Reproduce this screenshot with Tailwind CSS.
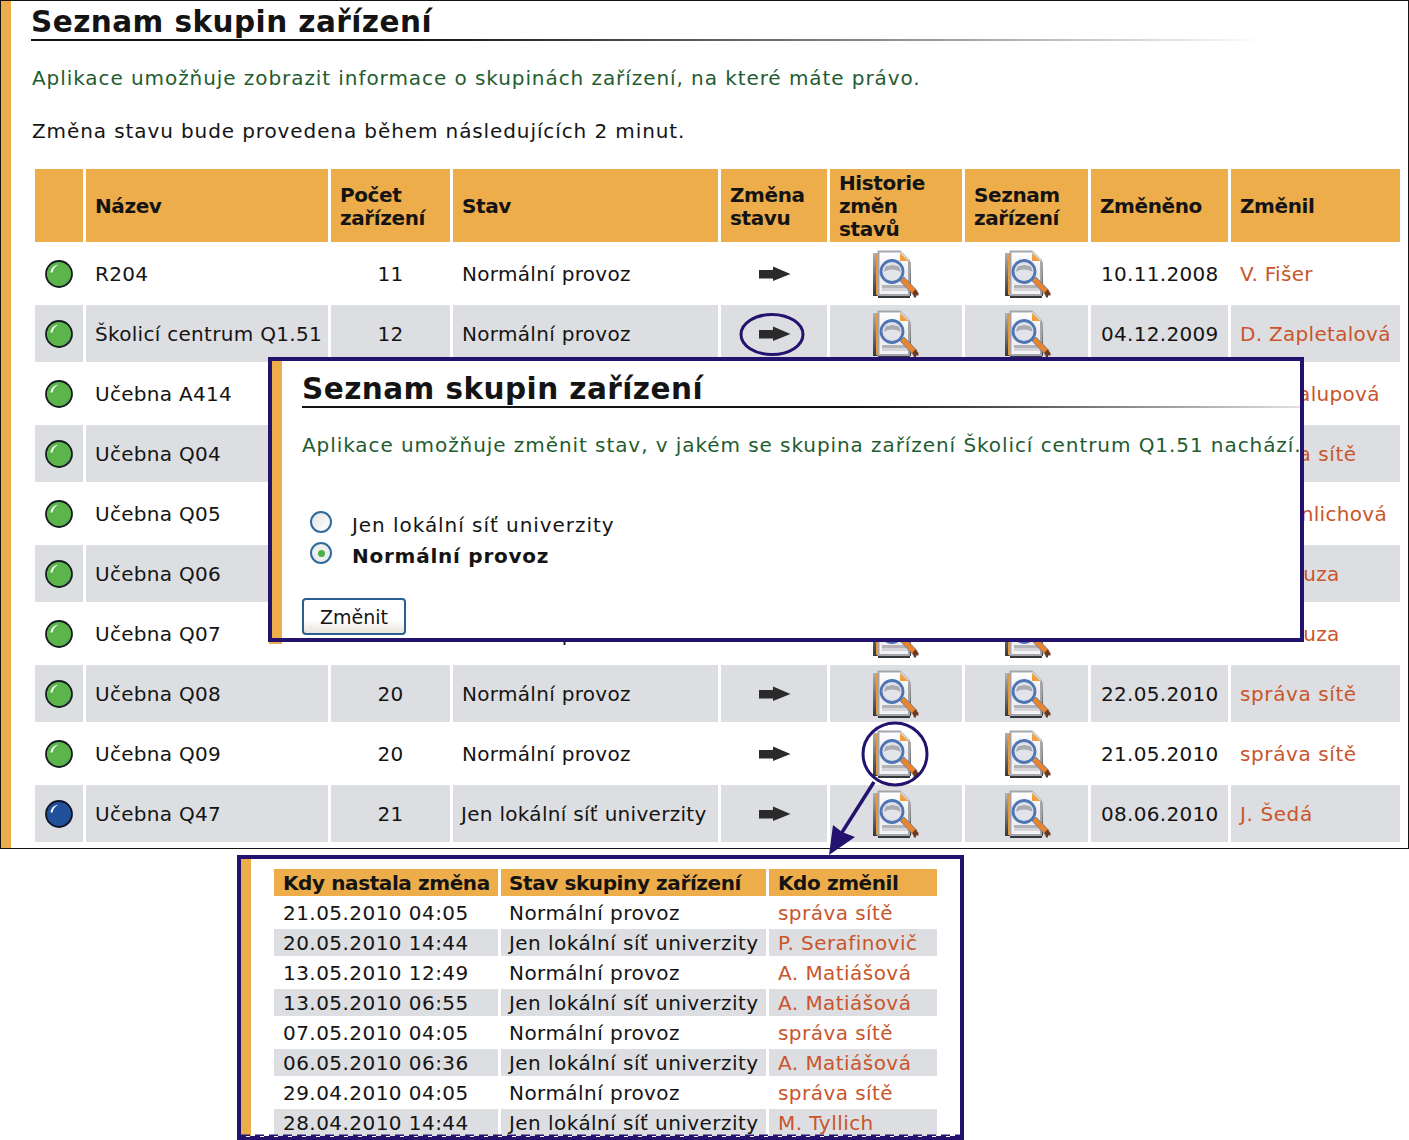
<!DOCTYPE html>
<html lang="cs">
<head>
<meta charset="utf-8">
<script src="https://cdn.jsdelivr.net/npm/@tailwindcss/browser@4"></script>
<title>Seznam skupin zařízení</title>
</head>
<body class="bg-white text-[#141414] text-[20px] font-['DejaVu_Sans',sans-serif]">
<svg class="absolute w-0 h-0" aria-hidden="true">
  <defs>
    <linearGradient id="side" x1="0" y1="0" x2="0" y2="1"><stop offset="0" stop-color="#b0b0b0"/><stop offset="1" stop-color="#33383c"/></linearGradient>
    <linearGradient id="pg" x1="0" y1="0" x2="0" y2="1"><stop offset="0" stop-color="#ffffff"/><stop offset="0.55" stop-color="#ececef"/><stop offset="1" stop-color="#f4f4f6"/></linearGradient>
    <linearGradient id="gb" x1="0.2" y1="0.2" x2="1" y2="1"><stop offset="0.7" stop-color="#5cb54a"/><stop offset="0.95" stop-color="#3f70a8"/></linearGradient>
    <linearGradient id="bb" x1="0.2" y1="0.2" x2="1" y2="1"><stop offset="0.7" stop-color="#21509c"/><stop offset="1" stop-color="#0e1f44"/></linearGradient>
    <symbol id="doc" viewBox="0 0 46 48">
      <rect x="0" y="3" width="5" height="43" fill="url(#side)"/>
      <rect x="3" y="4" width="2.500" height="41" fill="#e8963a"/>
      <rect x="5" y="45" width="32" height="3" fill="#33383c"/>
      <rect x="35" y="12" width="3" height="34" fill="url(#side)"/>
      <path d="M5.500 1.500H27L36 10.500V45H5.500Z" fill="url(#pg)" stroke="#a4a6ab" stroke-width="2"/>
      <path d="M27 2.500V11H36Z" fill="#f0a040"/>
      <path d="M27 2L36 10.500" stroke="#d8d8d8" stroke-width="1.500"/>
      <rect x="9" y="35" width="26" height="3" fill="#b4b4b8"/>
      <rect x="9" y="38" width="26" height="3" fill="#d4d4d8"/>
      <circle cx="19" cy="21.500" r="11" fill="#e2e4e9" stroke="#4f75b5" stroke-width="2.800"/>
      <path d="M11 22C12 16 14 15 16 16C18 14.500 21 14.500 23 16C25 15 27 17 27.500 22C24 18.500 14 18.500 11 22Z" fill="#a9abb0"/>
      <path d="M27 31L31 27L44 40.500L40 44.500Z" fill="#e8842c" stroke="#4f75b5" stroke-width="0.700"/>
      <path d="M39.500 42.500L42.500 39.500L45.500 43V45.500H43V47.500H41Z" fill="#6b3a22"/>
    </symbol>
    <symbol id="arrow" viewBox="0 0 32 16">
      <path d="M0 4H14V0.500L31.500 8L14 15V12.500H0Z" fill="#2b2b2b"/>
    </symbol>
    <symbol id="green" viewBox="0 0 28 28">
      <circle cx="14" cy="14" r="13" fill="url(#gb)" stroke="#141c20" stroke-width="1.800"/>
      <path d="M5.500 12.500C6 8.500 8.500 5.500 13 4.800C9.500 7 8 9.500 7.500 12.500Z" fill="#ffffff"/>
    </symbol>
    <symbol id="blue" viewBox="0 0 28 28">
      <circle cx="14" cy="14" r="13" fill="url(#bb)" stroke="#0d1525" stroke-width="1.800"/>
      <path d="M5.500 12.500C6 8.500 8.500 5.500 13 4.800C9.500 7 8 9.500 7.500 12.500Z" fill="#ffffff"/>
    </symbol>
  </defs>
</svg>

<div class="relative w-[1409px] h-[1140px] overflow-hidden">
  <!-- main frame -->
  <div class="flex w-[1409px] h-[849px] border border-[#141414]">
    <div class="w-[10px] bg-[#edad4a]"></div>
    <div class="flex-1">
      <div class="pl-[20px] h-[38px] pt-[3px]">
        <h1 class="text-[29.500px] leading-[36px] font-bold tracking-[0.450px] text-[#141414]">Seznam skupin zařízení</h1>
      </div>
      <div class="ml-[20px] w-[1234px] h-[2px] bg-linear-to-r from-[#141414] from-30% to-white"></div>
      <p class="pl-[21px] mt-[23px] h-[28px] leading-[28px] text-[#1f5c30] tracking-[0.930px]">Aplikace umožňuje zobrazit informace o skupinách zařízení, na které máte právo.</p>
      <p class="pl-[21px] mt-[25px] h-[28px] leading-[28px] tracking-[0.900px]">Změna stavu bude provedena během následujících 2 minut.</p>

      <div class="ml-[24px] mt-[24px] grid grid-cols-[48px_242px_119px_265px_106px_132px_123px_137px_169px] gap-y-[3px] gap-x-[3px] tracking-[0.300px]">
        <div class="col-span-9 grid grid-cols-subgrid h-[73px] font-bold tracking-[-0.400px] leading-[23px] [&>div]:bg-[#edad4a] [&>div]:flex [&>div]:items-center [&>div]:pl-[9px] [&>div]:pt-[2px]">
          <div></div><div>Název</div><div>Počet<br>zařízení</div><div>Stav</div><div>Změna<br>stavu</div><div>Historie<br>změn<br>stavů</div><div>Seznam<br>zařízení</div><div>Změněno</div><div>Změnil</div>
        </div>

        <div class="col-span-9 grid grid-cols-subgrid h-[57px] [&>div]:flex [&>div]:items-center">
          <div class="justify-center"><svg class="w-[28px] h-[28px]"><use href="#green"/></svg></div><div class="pl-[9px]">R204</div><div class="justify-center">11</div><div class="pl-[9px]">Normální provoz</div><div class="justify-center pl-[2px]"><svg class="w-[32px] h-[16px]"><use href="#arrow"/></svg></div><div class="justify-center"><svg class="w-[46px] h-[48px]"><use href="#doc"/></svg></div><div class="justify-center pl-[2px]"><svg class="w-[46px] h-[48px]"><use href="#doc"/></svg></div><div class="pl-[10px]">10.11.2008</div><div class="pl-[9px] text-[#c9552b]">V. Fišer</div>
        </div>
        <div class="col-span-9 grid grid-cols-subgrid h-[57px] [&>div]:bg-[#dddee2] [&>div]:flex [&>div]:items-center">
          <div class="justify-center"><svg class="w-[28px] h-[28px]"><use href="#green"/></svg></div><div class="pl-[9px] whitespace-nowrap">Školicí centrum Q1.51</div><div class="justify-center">12</div><div class="pl-[9px]">Normální provoz</div><div class="justify-center pl-[2px]"><svg class="w-[32px] h-[16px]"><use href="#arrow"/></svg></div><div class="justify-center"><svg class="w-[46px] h-[48px]"><use href="#doc"/></svg></div><div class="justify-center pl-[2px]"><svg class="w-[46px] h-[48px]"><use href="#doc"/></svg></div><div class="pl-[10px]">04.12.2009</div><div class="pl-[9px] text-[#c9552b] whitespace-nowrap">D. Zapletalová</div>
        </div>
        <div class="col-span-9 grid grid-cols-subgrid h-[57px] [&>div]:flex [&>div]:items-center">
          <div class="justify-center"><svg class="w-[28px] h-[28px]"><use href="#green"/></svg></div><div class="pl-[9px]">Učebna A414</div><div class="justify-center">14</div><div class="pl-[9px]">Normální provoz</div><div class="justify-center pl-[2px]"><svg class="w-[32px] h-[16px]"><use href="#arrow"/></svg></div><div class="justify-center"><svg class="w-[46px] h-[48px]"><use href="#doc"/></svg></div><div class="justify-center pl-[2px]"><svg class="w-[46px] h-[48px]"><use href="#doc"/></svg></div><div class="pl-[10px]">12.05.2010</div><div class="pl-[9px] text-[#c9552b] whitespace-nowrap">M. Chalupová</div>
        </div>
        <div class="col-span-9 grid grid-cols-subgrid h-[57px] [&>div]:bg-[#dddee2] [&>div]:flex [&>div]:items-center">
          <div class="justify-center"><svg class="w-[28px] h-[28px]"><use href="#green"/></svg></div><div class="pl-[9px]">Učebna Q04</div><div class="justify-center">18</div><div class="pl-[9px]">Normální provoz</div><div class="justify-center pl-[2px]"><svg class="w-[32px] h-[16px]"><use href="#arrow"/></svg></div><div class="justify-center"><svg class="w-[46px] h-[48px]"><use href="#doc"/></svg></div><div class="justify-center pl-[2px]"><svg class="w-[46px] h-[48px]"><use href="#doc"/></svg></div><div class="pl-[10px]">21.05.2010</div><div class="pl-[9px] text-[#c9552b] whitespace-nowrap tracking-[0.600px]">správa sítě</div>
        </div>
        <div class="col-span-9 grid grid-cols-subgrid h-[57px] [&>div]:flex [&>div]:items-center">
          <div class="justify-center"><svg class="w-[28px] h-[28px]"><use href="#green"/></svg></div><div class="pl-[9px]">Učebna Q05</div><div class="justify-center">20</div><div class="pl-[9px]">Normální provoz</div><div class="justify-center pl-[2px]"><svg class="w-[32px] h-[16px]"><use href="#arrow"/></svg></div><div class="justify-center"><svg class="w-[46px] h-[48px]"><use href="#doc"/></svg></div><div class="justify-center pl-[2px]"><svg class="w-[46px] h-[48px]"><use href="#doc"/></svg></div><div class="pl-[10px]">18.05.2010</div><div class="pl-[11px] text-[#c9552b] whitespace-nowrap">M. Hanlichová</div>
        </div>
        <div class="col-span-9 grid grid-cols-subgrid h-[57px] [&>div]:bg-[#dddee2] [&>div]:flex [&>div]:items-center">
          <div class="justify-center"><svg class="w-[28px] h-[28px]"><use href="#green"/></svg></div><div class="pl-[9px]">Učebna Q06</div><div class="justify-center">20</div><div class="pl-[9px]">Normální provoz</div><div class="justify-center pl-[2px]"><svg class="w-[32px] h-[16px]"><use href="#arrow"/></svg></div><div class="justify-center"><svg class="w-[46px] h-[48px]"><use href="#doc"/></svg></div><div class="justify-center pl-[2px]"><svg class="w-[46px] h-[48px]"><use href="#doc"/></svg></div><div class="pl-[10px]">17.05.2010</div><div class="pl-[9px] text-[#c9552b] whitespace-nowrap">Z. Hrouza</div>
        </div>
        <div class="col-span-9 grid grid-cols-subgrid h-[57px] [&>div]:flex [&>div]:items-center">
          <div class="justify-center"><svg class="w-[28px] h-[28px]"><use href="#green"/></svg></div><div class="pl-[9px]">Učebna Q07</div><div class="justify-center">20</div><div class="pl-[9px]">Normální provoz</div><div class="justify-center pl-[2px]"><svg class="w-[32px] h-[16px]"><use href="#arrow"/></svg></div><div class="justify-center"><svg class="w-[46px] h-[48px]"><use href="#doc"/></svg></div><div class="justify-center pl-[2px]"><svg class="w-[46px] h-[48px]"><use href="#doc"/></svg></div><div class="pl-[10px]">17.05.2010</div><div class="pl-[9px] text-[#c9552b] whitespace-nowrap">Z. Hrouza</div>
        </div>
        <div class="col-span-9 grid grid-cols-subgrid h-[57px] [&>div]:bg-[#dddee2] [&>div]:flex [&>div]:items-center">
          <div class="justify-center"><svg class="w-[28px] h-[28px]"><use href="#green"/></svg></div><div class="pl-[9px]">Učebna Q08</div><div class="justify-center">20</div><div class="pl-[9px]">Normální provoz</div><div class="justify-center pl-[2px]"><svg class="w-[32px] h-[16px]"><use href="#arrow"/></svg></div><div class="justify-center"><svg class="w-[46px] h-[48px]"><use href="#doc"/></svg></div><div class="justify-center pl-[2px]"><svg class="w-[46px] h-[48px]"><use href="#doc"/></svg></div><div class="pl-[10px]">22.05.2010</div><div class="pl-[9px] text-[#c9552b] whitespace-nowrap tracking-[0.600px]">správa sítě</div>
        </div>
        <div class="col-span-9 grid grid-cols-subgrid h-[57px] [&>div]:flex [&>div]:items-center">
          <div class="justify-center"><svg class="w-[28px] h-[28px]"><use href="#green"/></svg></div><div class="pl-[9px]">Učebna Q09</div><div class="justify-center">20</div><div class="pl-[9px]">Normální provoz</div><div class="justify-center pl-[2px]"><svg class="w-[32px] h-[16px]"><use href="#arrow"/></svg></div><div class="justify-center"><svg class="w-[46px] h-[48px]"><use href="#doc"/></svg></div><div class="justify-center pl-[2px]"><svg class="w-[46px] h-[48px]"><use href="#doc"/></svg></div><div class="pl-[10px]">21.05.2010</div><div class="pl-[9px] text-[#c9552b] whitespace-nowrap tracking-[0.600px]">správa sítě</div>
        </div>
        <div class="col-span-9 grid grid-cols-subgrid h-[57px] [&>div]:bg-[#dddee2] [&>div]:flex [&>div]:items-center">
          <div class="justify-center"><svg class="w-[28px] h-[28px]"><use href="#blue"/></svg></div><div class="pl-[9px]">Učebna Q47</div><div class="justify-center">21</div><div class="pl-[8px] whitespace-nowrap">Jen lokální síť univerzity</div><div class="justify-center pl-[2px]"><svg class="w-[32px] h-[16px]"><use href="#arrow"/></svg></div><div class="justify-center"><svg class="w-[46px] h-[48px]"><use href="#doc"/></svg></div><div class="justify-center pl-[2px]"><svg class="w-[46px] h-[48px]"><use href="#doc"/></svg></div><div class="pl-[10px]">08.06.2010</div><div class="pl-[9px] text-[#c9552b] whitespace-nowrap tracking-[0.600px]">J. Šedá</div>
        </div>
      </div>
    </div>
  </div>

  <!-- history panel -->
  <div class="ml-[237px] mt-[6px] w-[727px] h-[285px] border-[4px] border-[#24126f] flex overflow-hidden">
    <div class="w-[10px] bg-[#edad4a]"></div>
    <div class="ml-[23px] mt-[10px] w-[663px] grid grid-cols-[224px_265px_168px] gap-x-[3px] gap-y-[3px] content-start tracking-[0.450px] [&>div]:pl-[9px] [&>div:nth-child(3n+2)]:pl-[8px] [&>div]:h-[27px] [&>div]:leading-[29px] [&>div]:whitespace-nowrap">
      <div class="bg-[#edad4a] font-bold tracking-[-0.400px]">Kdy nastala změna</div><div class="bg-[#edad4a] font-bold tracking-[-0.400px]">Stav skupiny zařízení</div><div class="bg-[#edad4a] font-bold tracking-[-0.400px]">Kdo změnil</div>
      <div>21.05.2010 04:05</div><div>Normální provoz</div><div class="text-[#c9552b]">správa sítě</div>
      <div class="bg-[#dddee2]">20.05.2010 14:44</div><div class="bg-[#dddee2]">Jen lokální síť univerzity</div><div class="bg-[#dddee2] text-[#c9552b]">P. Serafinovič</div>
      <div>13.05.2010 12:49</div><div>Normální provoz</div><div class="text-[#c9552b]">A. Matiášová</div>
      <div class="bg-[#dddee2]">13.05.2010 06:55</div><div class="bg-[#dddee2]">Jen lokální síť univerzity</div><div class="bg-[#dddee2] text-[#c9552b]">A. Matiášová</div>
      <div>07.05.2010 04:05</div><div>Normální provoz</div><div class="text-[#c9552b]">správa sítě</div>
      <div class="bg-[#dddee2]">06.05.2010 06:36</div><div class="bg-[#dddee2]">Jen lokální síť univerzity</div><div class="bg-[#dddee2] text-[#c9552b]">A. Matiášová</div>
      <div>29.04.2010 04:05</div><div>Normální provoz</div><div class="text-[#c9552b]">správa sítě</div>
      <div class="bg-[#dddee2]">28.04.2010 14:44</div><div class="bg-[#dddee2]">Jen lokální síť univerzity</div><div class="bg-[#dddee2] text-[#c9552b]">M. Tyllich</div>
    </div>
  </div>

  <!-- overlay dialog -->
  <div class="absolute left-[269px] top-[641px] w-[13px] h-[3px] bg-[#edad4a]"></div>
  <div class="absolute left-[268px] top-[357px] w-[1036px] h-[285px] border-[4px] border-[#24126f] bg-white flex overflow-hidden">
    <div class="w-[10px] bg-[#edad4a]"></div>
    <div class="flex-1 pl-[20px] min-w-0">
      <h2 class="text-[29.500px] h-[35px] leading-[36px] mt-[10px] font-bold tracking-[0.450px]">Seznam skupin zařízení</h2>
      <div class="h-[2px] w-full bg-linear-to-r from-[#141414] from-55% to-[#e2e2e4]"></div>
      <p class="mt-[23px] h-[28px] leading-[28px] text-[#1f5c30] tracking-[0.930px] whitespace-nowrap">Aplikace umožňuje změnit stav, v jakém se skupina zařízení Školicí centrum Q1.51 nachází.</p>
      <div class="mt-[52px] ml-[8px] flex items-center gap-[20px] h-[28px]">
        <span class="w-[22px] h-[22px] mb-[6px] rounded-full border-2 border-[#2f6a9e] bg-linear-to-br from-[#e4e4e0] to-white"></span>
        <span class="tracking-[0.950px]">Jen lokální síť univerzity</span>
      </div>
      <div class="mt-[3px] ml-[8px] flex items-center gap-[20px] h-[28px]">
        <span class="w-[22px] h-[22px] mb-[6px] rounded-full border-2 border-[#2f6a9e] bg-[#eeeeea] flex items-center justify-center"><span class="w-[7px] h-[7px] rounded-full bg-[#4cb04c]"></span></span>
        <span class="font-bold tracking-[0.750px]">Normální provoz</span>
      </div>
      <button class="mt-[28px] w-[104px] h-[37px] rounded-[4px] border-2 border-[#2a5f8f] bg-linear-to-b from-white from-60% to-[#e6e4da] text-[19px] leading-[30px] text-center">Změnit</button>
    </div>
  </div>

  <!-- annotations -->
  <svg class="absolute left-0 top-0 pointer-events-none" width="1409" height="1140" viewBox="0 0 1409 1140" fill="none">
    <ellipse cx="772" cy="334.500" rx="31" ry="20" stroke="#24126f" stroke-width="3"/>
    <ellipse cx="895" cy="754" rx="32" ry="31" stroke="#24126f" stroke-width="3"/>
    <path d="M874 782L841 834" stroke="#24126f" stroke-width="3.500"/>
    <path d="M829 855L833 825L842 832L855 837Z" fill="#24126f"/>
    <path d="M241 1135.500H960" stroke="#24126f" stroke-width="2" stroke-dasharray="9 5"/>
    <path d="M246 1136.500H960" stroke="#ffffff" stroke-width="1" stroke-dasharray="4 10"/>
  </svg>
</div>
</body>
</html>
